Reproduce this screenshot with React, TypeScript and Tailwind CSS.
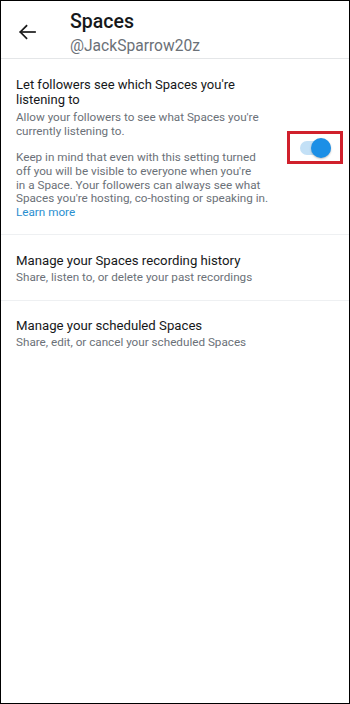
const font = { fontFamily: 'Roboto, "Noto Sans", sans-serif' }

function Row({ title, sub, pt, pb, last }: { title: string; sub: string; pt: string; pb: string; last?: boolean }) {
  return (
    <div className={`${pt} ${pb} px-[15px] ${last ? '' : 'border-b border-[#eef0f2]'}`}>
      <div className="text-[13.2px] leading-[16px] text-[#16181a]">{title}</div>
      <div className="mt-[1px] text-[11.7px] leading-[15px] text-[#6b7178]">{sub}</div>
    </div>
  )
}

export default function App() {
  return (
    <div className="h-[704px] w-[350px] border border-black bg-white" style={font}>
      <div className="flex h-[58px] items-start border-b border-[#e4e6e8]">
        <svg className="ml-[17px] mt-[23px]" width="18" height="16" viewBox="0 0 18 16" fill="none" stroke="#1a1a1a" strokeWidth="1.7" strokeLinecap="square">
          <path d="M17 8H2.5" />
          <path d="M8.5 1.8L2.3 8l6.2 6.2" />
        </svg>
        <div className="ml-[34px] pt-[9px]">
          <div className="text-[19.5px] font-medium leading-[24px] text-[#16181a]">Spaces</div>
          <div className="mt-[3px] text-[15.6px] leading-[18px] text-[#6b7178]">@JackSparrow20z</div>
        </div>
      </div>

      <div className="flex border-b border-[#eef0f2] pb-[14px] pl-[15px] pr-[6px] pt-[19px]">
        <div className="flex-1">
          <div className="text-[13px] leading-[14.5px] text-[#16181a]">
            Let followers see which Spaces you're
            <br />
            listening to
          </div>
          <div className="mt-[2.5px] text-[11.7px] leading-[14.3px] text-[#6b7178]">
            Allow your followers to see what Spaces you're
            <br />
            currently listening to.
          </div>
          <div className="mt-[13px] text-[11.7px] leading-[13.7px] text-[#6b7178]">
            Keep in mind that even with this setting turned
            <br />
            off you will be visible to everyone when you're
            <br />
            in a Space. Your followers can always see what
            <br />
            Spaces you're hosting, co-hosting or speaking in.
            <br />
            <span className="text-[#2a8fd0]">Learn more</span>
          </div>
        </div>
        <div className="mt-[53px] flex h-[33px] w-[56px] shrink-0 items-center justify-center self-start border-[3px] border-[#d0202c]">
          <div className="relative h-[14px] w-[31px] rounded-full bg-[#c3e0f6]">
            <div className="absolute -top-[3px] right-0 h-[20px] w-[20px] rounded-full bg-[#1c8fe6] shadow-[0_1px_2px_rgba(0,0,0,0.25)]" />
          </div>
        </div>
      </div>

      <Row title="Manage your Spaces recording history" sub="Share, listen to, or delete your past recordings" pt="pt-[18px]" pb="pb-[15px]" />
      <Row title="Manage your scheduled Spaces" sub="Share, edit, or cancel your scheduled Spaces" pt="pt-[17px]" pb="pb-[15px]" last />
    </div>
  )
}
